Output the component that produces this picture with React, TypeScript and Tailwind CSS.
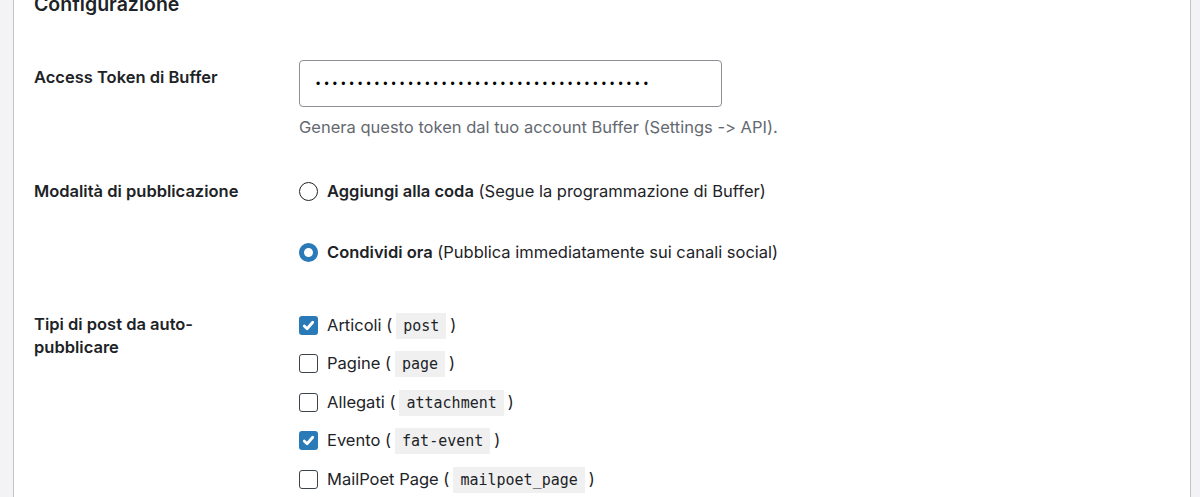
const font = "font-['Inter','Noto_Sans',sans-serif] [font-feature-settings:'calt'_0]";

function Code({ children }: { children: string }) {
  return (
    <code className="mx-[4px] bg-[#f0f0f1] px-[7px] py-[4px] font-['DejaVu_Sans_Mono',monospace] text-[15px] text-[#1d2327]">
      {children}
    </code>
  );
}

function Radio({ checked }: { checked?: boolean }) {
  return checked ? (
    <span className="box-border inline-block h-[19px] w-[19px] shrink-0 rounded-full border-[5px] border-[#2a7ab8] bg-white" />
  ) : (
    <span className="box-border inline-block h-[19px] w-[19px] shrink-0 rounded-full border-[1.5px] border-[#1d2327] bg-white" />
  );
}

function Checkbox({ checked }: { checked?: boolean }) {
  if (checked) {
    return (
      <span className="flex h-[19px] w-[19px] shrink-0 items-center justify-center rounded-[3px] bg-[#2a7ab8]">
        <svg viewBox="0 0 16 16" className="h-[15px] w-[15px]" fill="none" stroke="white" strokeWidth="3" strokeLinecap="round" strokeLinejoin="round">
          <path d="M3.5 8.5 6.5 11.5 12.5 4.5" />
        </svg>
      </span>
    );
  }
  return <span className="box-border inline-block h-[19px] w-[19px] shrink-0 rounded-[3px] border-[1.5px] border-[#3c434a] bg-white" />;
}

const postTypes = [
  { label: "Articoli", slug: "post", checked: true },
  { label: "Pagine", slug: "page", checked: false },
  { label: "Allegati", slug: "attachment", checked: false },
  { label: "Evento", slug: "fat-event", checked: true },
  { label: "MailPoet Page", slug: "mailpoet_page", checked: false },
];

export default function App() {
  return (
    <div className={`h-[497px] w-[1200px] overflow-hidden bg-[#f3f3f6] ${font} text-[#1d2327]`}>
      <div className="ml-[13px] flow-root h-full w-[1178px] border-x border-[#c3c4c7] bg-white pl-[20px]">
        <h2 className="mt-[-8px] text-[19.5px] font-semibold leading-[24px]">Configurazione</h2>

        {/* Access token */}
        <div className="mt-[44px] flex items-start">
          <label className="mr-[35px] w-[230px] pt-[7px] text-[16.5px] font-semibold leading-[20px]">
            Access Token di Buffer
          </label>
          <div>
            <input
              type="password"
              readOnly
              value="••••••••••••••••••••••••••••••••••••••••"
              className="box-border h-[47px] w-[423px] rounded-[4px] border border-[#8c8f94] bg-white px-[16px] font-['Liberation_Sans',sans-serif] text-[12px] tracking-[4.2px] text-black outline-none"
            />
            <p className="mt-[10px] text-[16.5px] leading-[20px] text-[#646970]">
              Genera questo token dal tuo account Buffer (Settings -&gt; API).
            </p>
          </div>
        </div>

        {/* Modalità */}
        <div className="mt-[44px] flex items-start">
          <div className="mr-[35px] w-[230px] text-[16.5px] font-semibold leading-[20px]">
            Modalità di pubblicazione
          </div>
          <div className="flex flex-col gap-[41px] text-[16.5px] leading-[20px]">
            <label className="flex items-center gap-[9px]">
              <Radio />
              <span>
                <span className="font-semibold">Aggiungi alla coda</span> (Segue la programmazione di Buffer)
              </span>
            </label>
            <label className="flex items-center gap-[9px]">
              <Radio checked />
              <span>
                <span className="font-semibold">Condividi ora</span> (Pubblica immediatamente sui canali social)
              </span>
            </label>
          </div>
        </div>

        {/* Tipi di post */}
        <div className="mt-[44px] flex items-start">
          <div className="mr-[35px] w-[230px] pt-[7px] text-[16.5px] font-semibold leading-[23px]">
            Tipi di post da auto-pubblicare
          </div>
          <div className="flex flex-col text-[16.5px] leading-[20px]">
            {postTypes.map((t) => (
              <label key={t.slug} className="flex h-[38.5px] items-center gap-[9px]">
                <Checkbox checked={t.checked} />
                <span>
                  {t.label} (<Code>{t.slug}</Code>)
                </span>
              </label>
            ))}
          </div>
        </div>
      </div>
    </div>
  );
}
